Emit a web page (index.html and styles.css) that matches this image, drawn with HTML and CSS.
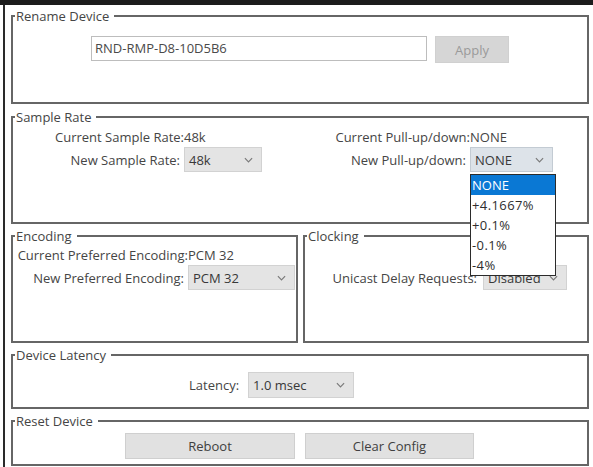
FILE: index.html
```html
<!DOCTYPE html>
<html>
<head>
<meta charset="utf-8">
<link rel="stylesheet" href="styles.css">
</head>
<body>
<div class="topbar"></div>
<div class="frame">
  <fieldset class="grp g-rename">
    <legend>Rename Device</legend>
    <div class="rename-row">
      <div class="textbox">RND-RMP-D8-10D5B6</div>
      <button class="btn btn-apply">Apply</button>
    </div>
  </fieldset>

  <fieldset class="grp g-sample">
    <legend>Sample Rate</legend>
    <div class="sample-grid">
      <div class="lbl">Current Sample Rate:</div>
      <div class="val">48k</div>
      <div class="lbl">Current Pull-up/down:</div>
      <div class="val">NONE</div>
      <div class="lbl lbl-new">New Sample Rate:</div>
      <div class="combo combo-rate"><span>48k</span><svg class="chev" viewBox="0 0 10 6"><polyline points="1,1 5,5 9,1"/></svg></div>
      <div class="lbl lbl-new">New Pull-up/down:</div>
      <div class="combo combo-pull open"><span>NONE</span><svg class="chev" viewBox="0 0 10 6"><polyline points="1,1 5,5 9,1"/></svg>
        <ul class="dropdown">
          <li class="sel">NONE</li>
          <li>+4.1667%</li>
          <li>+0.1%</li>
          <li>-0.1%</li>
          <li>-4%</li>
        </ul>
      </div>
    </div>
  </fieldset>

  <div class="pair">
    <fieldset class="grp g-enc">
      <legend>Encoding</legend>
      <div class="enc-grid">
        <div class="lbl">Current Preferred Encoding:</div>
        <div class="val">PCM 32</div>
        <div class="lbl lbl-new">New Preferred Encoding:</div>
        <div class="combo combo-enc"><span>PCM 32</span><svg class="chev" viewBox="0 0 10 6"><polyline points="1,1 5,5 9,1"/></svg></div>
      </div>
    </fieldset>
    <fieldset class="grp g-clock">
      <legend>Clocking</legend>
      <div class="clock-grid">
        <div class="lbl"></div>
        <div class="val"></div>
        <div class="lbl lbl-uni">Unicast Delay Requests:</div>
        <div class="combo combo-clock"><span>Disabled</span><svg class="chev" viewBox="0 0 10 6"><polyline points="1,1 5,5 9,1"/></svg></div>
      </div>
    </fieldset>
  </div>

  <fieldset class="grp g-lat">
    <legend>Device Latency</legend>
    <div class="lat-row">
      <div class="lbl">Latency:</div>
      <div class="combo combo-lat"><span>1.0 msec</span><svg class="chev" viewBox="0 0 10 6"><polyline points="1,1 5,5 9,1"/></svg></div>
    </div>
  </fieldset>

  <fieldset class="grp g-reset">
    <legend>Reset Device</legend>
    <div class="reset-row">
      <button class="btn btn-reboot">Reboot</button>
      <button class="btn btn-clear">Clear Config</button>
    </div>
  </fieldset>
</div>
</body>
</html>
```

FILE: styles.css
```css
* { box-sizing: border-box; }
html, body {
  margin: 0;
  padding: 0;
  background: #ffffff;
  width: 593px;
  height: 467px;
  overflow: hidden;
}
body {
  font-family: "Open Sans", "Noto Sans", sans-serif;
  font-size: 13px;
  color: #454545;
}
.topbar {
  height: 5px;
  background: #1c1c1c;
}
.frame {
  margin-left: 3px;
  border-left: 2px solid #2a2a2a;
  height: 462px;
  padding: 2px 4px 0 6px;
  display: flex;
  flex-direction: column;
  gap: 3px;
}
.grp {
  margin: 0;
  padding: 0;
  border: 2px solid #666666;
  min-width: 0;
}
.grp legend {
  padding: 0 5px 0 1px;
  margin-left: 2px;
  line-height: 18px;
  height: 18px;
  color: #454545;
}
.g-rename { height: 97px; margin-bottom: 1px; }
.g-sample { height: 116px; }
.pair { display: flex; gap: 5px; height: 116px; }
.g-enc { width: 287px; height: 116px; }
.g-clock { flex: 1; height: 116px; }
.g-lat { height: 63px; }
.g-reset { height: 54px; }

/* rename */
.rename-row {
  margin-top: 11px;
  display: flex;
  justify-content: center;
  align-items: flex-start;
  gap: 8px;
}
.textbox {
  width: 336px;
  height: 25px;
  border: 1px solid #bdbdbd;
  padding-left: 3px;
  line-height: 23px;
  color: #4a4a4a;
}
.btn {
  font-family: inherit;
  font-size: 13px;
  margin: 0;
  padding: 0;
  border: 1px solid #cfcfcf;
  background: #e1e1e1;
  color: #404040;
  text-align: center;
}
.btn-apply {
  width: 74px;
  height: 27px;
  background: #d6d6d6;
  border-color: #d0d0d0;
  color: #9a9a9a;
}

/* labels */
.lbl { text-align: right; white-space: nowrap; }
.lbl-new { padding-right: 4px; }
.lbl-uni { padding-right: 6px; }
.val { white-space: nowrap; }

/* combos */
.combo {
  position: relative;
  height: 25px;
  background: #e4e4e4;
  border: 1px solid #d2d2d2;
  display: flex;
  align-items: center;
  justify-content: space-between;
  padding: 0 8px 0 4px;
  color: #383838;
}
.chev {
  width: 9px;
  height: 6px;
  fill: none;
  stroke: #7a7a7a;
  stroke-width: 1.3;
}

/* sample grid */
.sample-grid {
  margin-top: 1px;
  display: grid;
  grid-template-columns: 171px 100px 186px 84px;
  grid-template-rows: 20px 25px;
  align-items: center;
}
.combo-rate { width: 78px; }
.combo-pull {
  width: 83px;
  background: #dde3e9;
  border-color: #c3cbd3;
}
.dropdown {
  position: absolute;
  top: 26px;
  left: -1px;
  width: 86px;
  margin: 0;
  padding: 0;
  list-style: none;
  background: #ffffff;
  border: 1px solid #2b2b2b;
  z-index: 5;
}
.dropdown li {
  height: 20px;
  line-height: 20px;
  padding-left: 1px;
  color: #2e2e2e;
  letter-spacing: 0.4px;
}
.dropdown li.sel {
  background: #0a78d4;
  color: #ffffff;
  letter-spacing: 0;
}

/* encoding */
.enc-grid {
  display: grid;
  grid-template-columns: 175px 107px;
  grid-template-rows: 20px 25px;
  align-items: center;
}
.combo-enc { width: 107px; }

/* clocking */
.clock-grid {
  display: grid;
  grid-template-columns: 178px 84px;
  grid-template-rows: 20px 25px;
  align-items: center;
}
.combo-clock { width: 84px; }

/* latency */
.lat-row {
  margin-top: 8px;
  padding-left: 176px;
  display: flex;
  align-items: center;
  gap: 9px;
}
.combo-lat { width: 106px; height: 26px; }

/* reset */
.reset-row {
  margin-top: 3px;
  padding-left: 112px;
  display: flex;
  gap: 10px;
}
.btn-reboot { width: 170px; height: 26px; }
.btn-clear { width: 169px; height: 26px; }
```
